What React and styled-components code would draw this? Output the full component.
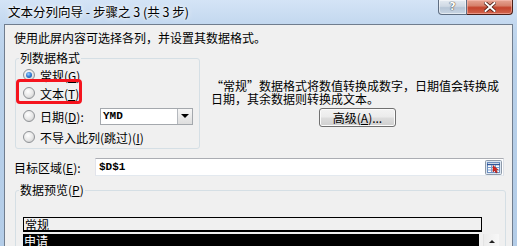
import React from 'react';
import styled, { createGlobalStyle } from 'styled-components';

const GlobalStyle = createGlobalStyle`
  html, body {
    margin: 0;
    padding: 0;
  }
  body {
    width: 517px;
    height: 246px;
    overflow: hidden;
    font-family: "Noto Sans CJK SC", "Liberation Sans", sans-serif;
    font-size: 12px;
    color: #000;
  }
`;

const Window = styled.div`
  width: 517px;
  height: 246px;
  box-sizing: border-box;
  padding: 0 4px;
  display: flex;
  flex-direction: column;
  overflow: hidden;
  background: linear-gradient(180deg, #d4e4f6 0px, #c3d8ef 24px, #b9d1ea 60px, #b4cde8 246px);
`;

const TitleBar = styled.div`
  height: 24px;
  margin: 0 -4px;
  display: flex;
  justify-content: space-between;
  align-items: flex-start;
  flex-shrink: 0;
`;

const Title = styled.div`
  padding-left: 8px;
  line-height: 24px;
  font-size: 12.5px;
  color: #000;
  text-shadow: 0 0 6px #fff, 0 0 3px #fff;
`;

const TitleButtons = styled.div`
  display: flex;
  margin-right: 4px;
`;

const HelpButton = styled.div`
  width: 29px;
  height: 15px;
  box-sizing: border-box;
  border: 1px solid #5f6e82;
  border-top: none;
  border-radius: 0 0 0 4px;
  background: linear-gradient(180deg, #e4eaf1 0%, #cfd9e4 45%, #b6c5d6 55%, #c9d6e4 100%);
  box-shadow: inset 0 0 0 1px rgba(255, 255, 255, 0.5);
  color: #fff;
  font-family: "DejaVu Sans", sans-serif;
  font-weight: bold;
  font-size: 11px;
  line-height: 13px;
  text-align: center;
  text-shadow: 0 0 1px #333, 0 0 1px #333;
`;

const CloseButton = styled.div`
  width: 46px;
  height: 15px;
  box-sizing: border-box;
  border: 1px solid #4c1e16;
  border-top: none;
  border-left: none;
  border-radius: 0 0 4px 0;
  background: linear-gradient(180deg, #e6a594 0%, #d7816c 40%, #c4432c 55%, #d2664f 100%);
  box-shadow: inset 0 0 0 1px rgba(255, 200, 190, 0.5);
  display: flex;
  align-items: center;
  justify-content: center;
`;

const Content = styled.div`
  flex: 1;
  border: 1px solid #707d8e;
  border-bottom: none;
  background: #f0f0f0;
  padding: 6px 0 0 9px;
  overflow: hidden;
`;

const Intro = styled.div`
  line-height: 14px;
  height: 14px;
  white-space: nowrap;
`;

const TopRow = styled.div`
  display: flex;
  align-items: flex-start;
  margin-top: 6px;
`;

const GroupBox = styled.fieldset`
  margin: ${(p) => p.$mt || 0}px ${(p) => p.$mr || 0}px 0 1px;
  padding: 0;
  border: 1px solid #d5dfe5;
  border-radius: 3px;
  box-sizing: border-box;
  min-width: 0;
  width: ${(p) => (p.$width ? `${p.$width}px` : 'auto')};
  flex-shrink: 0;
`;

const Legend = styled.legend`
  margin-left: 3px;
  padding: 0 1px;
  line-height: 14px;
  font-size: 12px;
`;

const GroupInner = styled.div`
  position: relative;
  padding: ${(p) => p.$pad};
`;

const OptionRow = styled.div`
  display: flex;
  align-items: center;
  height: ${(p) => p.$h}px;
  margin-top: ${(p) => p.$mt || 0}px;
  white-space: nowrap;
`;

const Radio = styled.span`
  position: relative;
  width: 12px;
  height: 12px;
  box-sizing: border-box;
  border-radius: 50%;
  border: 1px solid #8f9296;
  background: radial-gradient(circle at 40% 35%, #ffffff 0%, #e6e6e6 55%, #cfcfcf 80%, #f6f6f6 100%);
  margin-right: 5px;
  flex-shrink: 0;

  &::after {
    content: '';
    display: ${(p) => (p.$checked ? 'block' : 'none')};
    position: absolute;
    left: 2px;
    top: 2px;
    width: 6px;
    height: 6px;
    border-radius: 50%;
    background: radial-gradient(circle at 40% 35%, #9fd0ff 0%, #3b82d6 45%, #14458f 100%);
  }
`;

const Highlight = styled.div`
  position: absolute;
  left: 0;
  top: 14px;
  width: 66px;
  height: 25px;
  box-sizing: border-box;
  border: 3px solid #f5141e;
  border-radius: 4px;
  pointer-events: none;
`;

const SelectBox = styled.div`
  margin-left: auto;
  margin-right: 6px;
  width: 93px;
  height: 17px;
  box-sizing: border-box;
  border: 1px solid #a4a8ad;
  background: #fff;
  display: flex;
  align-items: stretch;
`;

const SelectValue = styled.span`
  flex: 1;
  padding-left: 2px;
  font-family: "Liberation Mono", "DejaVu Sans Mono", monospace;
  font-weight: bold;
  font-size: 11px;
  line-height: 15px;
`;

const DropButton = styled.span`
  width: 15px;
  box-sizing: border-box;
  border-left: 1px solid #b5b9be;
  background: linear-gradient(180deg, #f6f6f6, #dedede);
  display: flex;
  align-items: center;
  justify-content: center;

  &::before {
    content: '';
    border-left: 4px solid transparent;
    border-right: 4px solid transparent;
    border-top: 4px solid #000;
  }
`;

const RightPanel = styled.div`
  margin-left: 11px;
  padding-top: 28px;
  display: flex;
  flex-direction: column;
  align-items: flex-start;
`;

const Description = styled.div`
  line-height: 13px;
  white-space: nowrap;
`;

const Button = styled.div`
  margin: 3px 0 0 108px;
  width: 77px;
  height: 19px;
  box-sizing: border-box;
  border: 1px solid #707070;
  border-radius: 3px;
  background: linear-gradient(180deg, #f3f3f3 0%, #ebebeb 48%, #dddddd 52%, #cfcfcf 100%);
  box-shadow: inset 0 0 0 1px #fbfbfb;
  text-align: center;
  line-height: 17px;
  white-space: nowrap;
`;

const TargetRow = styled.div`
  display: flex;
  align-items: center;
  height: 18px;
  margin: 9px 8px 0 0;
`;

const TargetLabel = styled.span`
  width: 81px;
  flex-shrink: 0;
  white-space: nowrap;
`;

const InputBox = styled.div`
  flex: 1;
  height: 18px;
  box-sizing: border-box;
  border: 1px solid #abadb3;
  border-color: #abadb3 #dbdfe6 #e3e9ef #e2e3ea;
  background: #fff;
  display: flex;
  align-items: center;
  padding: 0 0 0 3px;
`;

const InputText = styled.span`
  flex: 1;
  font-family: "Liberation Mono", "DejaVu Sans Mono", monospace;
  font-weight: bold;
  font-size: 11px;
`;

const PreviewArea = styled.div`
  display: flex;
  flex-direction: column;
`;

const HeaderCell = styled.div`
  width: 459px;
  height: 15px;
  box-sizing: border-box;
  border: 1px solid #000;
  border-bottom-width: 2px;
  line-height: 13px;
  padding-left: 1px;
  background: #f0f0f0;
`;

const DataRow = styled.div`
  display: flex;
  margin-top: 2px;
`;

const SelectedColumn = styled.div`
  width: 456px;
  height: 20px;
  background: #000;
  color: #fff;
  line-height: 14px;
  padding-left: 1px;
  box-sizing: border-box;
`;

const ScrollBar = styled.div`
  width: 16px;
  margin-left: 4px;
  height: 20px;
  background: linear-gradient(90deg, #ececec, #f7f7f7);
  border-left: 1px solid #e3e3e3;
  display: flex;
  justify-content: center;
  padding-top: 6px;
  box-sizing: border-box;

  &::before {
    content: '';
    width: 0;
    height: 0;
    border-left: 3px solid transparent;
    border-right: 3px solid transparent;
    border-bottom: 3px solid #222;
  }
`;

const RangeIcon = () => (
  <svg width="17" height="15" viewBox="0 0 17 15" style={{ marginRight: 1 }}>
    <rect x="0.5" y="0.5" width="16" height="14" rx="1" fill="#dce6f1" stroke="#8e9aa9" />
    <rect x="2.5" y="2.5" width="12" height="10" fill="#ffffff" stroke="#6d8fc0" />
    <line x1="2" y1="4.5" x2="15" y2="4.5" stroke="#2f5597" strokeWidth="1.5" />
    <line x1="3" y1="7.5" x2="14" y2="7.5" stroke="#7da0d0" />
    <line x1="3" y1="10" x2="14" y2="10" stroke="#7da0d0" />
    <line x1="6.5" y1="5" x2="6.5" y2="12" stroke="#7da0d0" />
    <line x1="10.5" y1="5" x2="10.5" y2="12" stroke="#7da0d0" />
    <polygon points="8,5.5 8,12 9.6,10.4 11,13 12.4,12.3 11,9.8 13.2,9.8" fill="#d9231c" stroke="#8a1410" strokeWidth="0.5" />
  </svg>
);

const CloseIcon = () => (
  <svg width="12" height="10" viewBox="0 0 12 10">
    <path d="M1.5 1 L10.5 9 M10.5 1 L1.5 9" stroke="#4a1a12" strokeWidth="3.6" strokeLinecap="square" />
    <path d="M1.5 1 L10.5 9 M10.5 1 L1.5 9" stroke="#ffffff" strokeWidth="2" strokeLinecap="square" />
  </svg>
);

const App = () => (
  <>
    <GlobalStyle />
    <Window>
      <TitleBar>
        <Title>文本分列向导 - 步骤之 3 (共 3 步)</Title>
        <TitleButtons>
          <HelpButton>?</HelpButton>
          <CloseButton>
            <CloseIcon />
          </CloseButton>
        </TitleButtons>
      </TitleBar>
      <Content>
        <Intro>使用此屏内容可选择各列，并设置其数据格式。</Intro>
        <TopRow>
          <GroupBox $width={185}>
            <Legend>列数据格式</Legend>
            <GroupInner $pad="1px 0 2px 7px">
              <OptionRow $h={18}>
                <Radio $checked />
                常规(<u>G</u>)
              </OptionRow>
              <OptionRow $h={18}>
                <Radio />
                文本(<u>T</u>)
              </OptionRow>
              <OptionRow $h={20} $mt={4}>
                <Radio />
                日期(<u>D</u>):
                <SelectBox>
                  <SelectValue>YMD</SelectValue>
                  <DropButton />
                </SelectBox>
              </OptionRow>
              <OptionRow $h={18} $mt={2}>
                <Radio />
                不导入此列(跳过)(<u>I</u>)
              </OptionRow>
              <Highlight />
            </GroupInner>
          </GroupBox>
          <RightPanel>
            <Description>
              “常规”数据格式将数值转换成数字，日期值会转换成
              <br />
              日期，其余数据则转换成文本。
            </Description>
            <Button>高级(<u>A</u>)...</Button>
          </RightPanel>
        </TopRow>
        <TargetRow>
          <TargetLabel>目标区域(<u>E</u>):</TargetLabel>
          <InputBox>
            <InputText>$D$1</InputText>
            <RangeIcon />
          </InputBox>
        </TargetRow>
        <GroupBox $mr={6} $mt={7}>
          <Legend>数据预览(<u>P</u>)</Legend>
          <GroupInner $pad="20px 0 20px 7px">
            <PreviewArea>
              <HeaderCell>常规</HeaderCell>
              <DataRow>
                <SelectedColumn>申请</SelectedColumn>
                <ScrollBar />
              </DataRow>
            </PreviewArea>
          </GroupInner>
        </GroupBox>
      </Content>
    </Window>
  </>
);

export default App;
